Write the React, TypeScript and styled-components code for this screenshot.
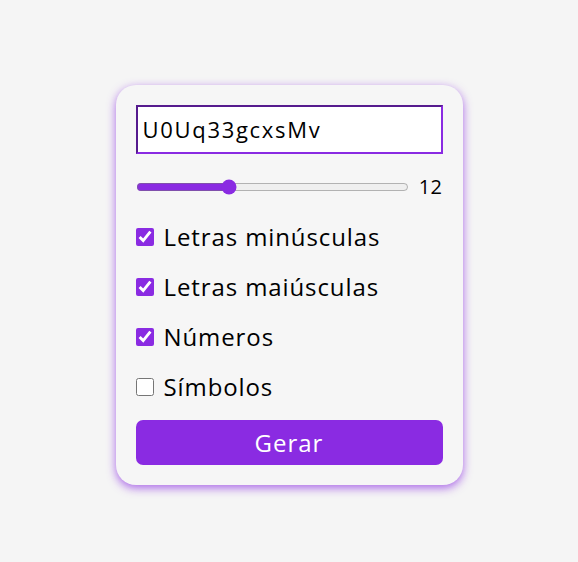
import React, { useState } from "react";
import styled, { createGlobalStyle } from "styled-components";

const GlobalStyle = createGlobalStyle`
  html, body {
    margin: 0;
    padding: 0;
    background: #f5f5f5;
  }
  body {
    font-family: "Open Sans", "Liberation Sans", sans-serif;
  }
`;

const Page = styled.div`
  box-sizing: border-box;
  height: 562px;
  padding-top: 7px;
  display: flex;
  align-items: center;
  justify-content: center;
`;

const Card = styled.div`
  width: 347px;
  box-sizing: border-box;
  padding: 20px;
  background: #f6f6f6;
  border-radius: 20px;
  box-shadow: 0 3px 10px rgba(138, 43, 226, 0.7);
  display: flex;
  flex-direction: column;
  gap: 16px;
`;

const PasswordInput = styled.input`
  box-sizing: border-box;
  width: 100%;
  height: 49px;
  margin: 0;
  padding: 0 5px;
  border: 2px inset blueviolet;
  background: #fff;
  font-family: inherit;
  font-size: 22px;
  letter-spacing: 1.7px;
  color: #000;
  outline: none;
`;

const Row = styled.label<{ $gap?: number }>`
  display: flex;
  align-items: center;
  height: 34px;
  gap: ${(p) => p.$gap ?? 10}px;
  font-size: 24px;
  letter-spacing: 0.9px;
  color: #000;
`;

const Range = styled.input`
  flex: 1;
  margin: 0;
  accent-color: blueviolet;
`;

const Value = styled.span`
  font-size: 20px;
  letter-spacing: 0.5px;
`;

const Check = styled.input`
  width: 18px;
  height: 18px;
  margin: 0;
  accent-color: blueviolet;
`;

const Button = styled.button`
  height: 45px;
  border: none;
  border-radius: 7px;
  background: #8a2be2;
  color: #fff;
  font-family: inherit;
  font-size: 24px;
  letter-spacing: 1px;
  cursor: pointer;
`;

export default function App() {
  const [len, setLen] = useState(12);
  const [opts, setOpts] = useState({ lower: true, upper: true, num: true, sym: false });
  const toggle = (k: keyof typeof opts) => setOpts((o) => ({ ...o, [k]: !o[k] }));
  return (
    <>
      <GlobalStyle />
      <Page>
        <Card>
          <PasswordInput readOnly value="U0Uq33gcxsMv" />
          <Row as="div" $gap={10}>
            <Range type="range" min={4} max={28} value={len} onChange={(e) => setLen(Number(e.target.value))} />
            <Value>{len}</Value>
          </Row>
          <Row>
            <Check type="checkbox" checked={opts.lower} onChange={() => toggle("lower")} />
            Letras minúsculas
          </Row>
          <Row>
            <Check type="checkbox" checked={opts.upper} onChange={() => toggle("upper")} />
            Letras maiúsculas
          </Row>
          <Row>
            <Check type="checkbox" checked={opts.num} onChange={() => toggle("num")} />
            Números
          </Row>
          <Row>
            <Check type="checkbox" checked={opts.sym} onChange={() => toggle("sym")} />
            Símbolos
          </Row>
          <Button>Gerar</Button>
        </Card>
      </Page>
    </>
  );
}
